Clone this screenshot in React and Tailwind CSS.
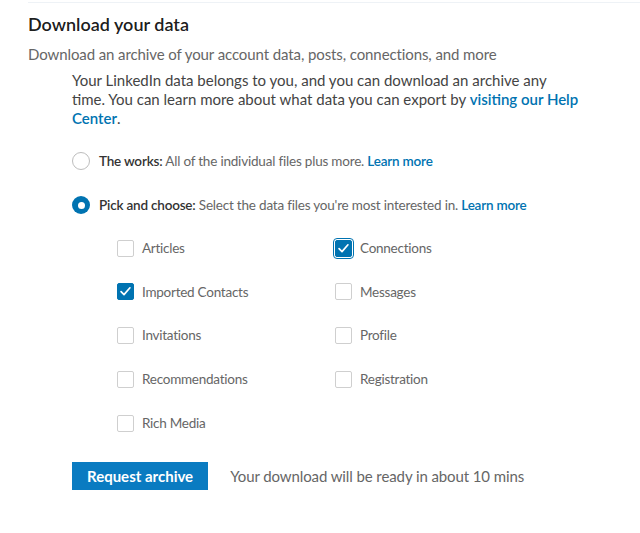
import { useState } from 'react';

const ITEMS = [
  ['Articles', false, 'Connections', true],
  ['Imported Contacts', true, 'Messages', false],
  ['Invitations', false, 'Profile', false],
  ['Recommendations', false, 'Registration', false],
  ['Rich Media', false, null, false],
];

function Check({ label, checked, focused }) {
  return (
    <label className="flex items-center gap-[8px] h-[20px]">
      <span
        className={`w-[17px] h-[17px] rounded-[2px] flex items-center justify-center ${
          checked ? 'bg-[#0073b1] border border-[#0073b1]' : 'bg-white border border-[#cfcfcf]'
        } ${focused ? 'outline outline-[1.5px] outline-offset-[1px] outline-[#0073b1]' : ''}`}
      >
        {checked && (
          <svg width="13" height="13" viewBox="0 0 14 14" aria-hidden="true">
            <path d="M2.2 7.2 5.4 10.4 11.8 3" fill="none" stroke="white" strokeWidth="1.8" strokeLinecap="round" strokeLinejoin="round" />
          </svg>
        )}
      </span>
      <span className="text-[13.5px] tracking-[-0.25px] text-[#666]">{label}</span>
    </label>
  );
}

function Radio({ selected }) {
  return selected ? (
    <span className="w-[18px] h-[18px] rounded-full bg-[#0073b1] flex items-center justify-center shrink-0">
      <span className="w-[7px] h-[7px] rounded-full bg-white" />
    </span>
  ) : (
    <span className="w-[18px] h-[18px] rounded-full border border-[#bdbdbd] bg-white shrink-0" />
  );
}

export default function App() {
  const [mode] = useState('pick');
  return (
    <div className="w-[640px] h-[533px] bg-white overflow-hidden" style={{ fontFamily: '"Lato", "Noto Sans", sans-serif' }}>
      <div className="ml-[28px] h-[3px] border-b border-[#eef2f6]" />
      <div className="pl-[28px] pt-[9px]">
        <h2 className="text-[18px] leading-[24px] font-semibold text-[#000000e6]">Download your data</h2>
        <p className="mt-[8px] text-[15px] leading-[20px] tracking-[-0.1px] text-[#666]">
          Download an archive of your account data, posts, connections, and more
        </p>
        <div className="pl-[44px] pr-[60px]">
          <p className="mt-[7px] text-[15px] leading-[19px] text-[#444]">
            Your LinkedIn data belongs to you, and you can download an archive any time. You can learn more about what data you can export by{' '}
            <a className="font-semibold leading-[19px] text-[#0073b1]">visiting our Help Center</a>.
          </p>

          <div className="mt-[22px] flex items-center gap-[9px] h-[22px]">
            <Radio selected={mode === 'works'} />
            <span className="text-[13.5px] tracking-[-0.2px] text-[#666]">
              <span className="font-semibold text-[#333]">The works:</span> All of the individual files plus more.{' '}
              <a className="font-semibold text-[#0073b1]">Learn more</a>
            </span>
          </div>
          <div className="mt-[22px] flex items-center gap-[9px] h-[22px]">
            <Radio selected={mode === 'pick'} />
            <span className="text-[13.5px] tracking-[-0.2px] text-[#666]">
              <span className="font-semibold text-[#333]">Pick and choose:</span> Select the data files you're most interested in.{' '}
              <a className="font-semibold text-[#0073b1]">Learn more</a>
            </span>
          </div>

          <div className="mt-[22px] pl-[45px] grid grid-cols-[218px_1fr] gap-y-[23.75px]">
            {ITEMS.map(([a, ac, b, bc], i) => (
              <div key={a} className="contents">
                <Check label={a} checked={ac} />
                {b ? <Check label={b} checked={bc} focused={i === 0} /> : <div />}
              </div>
            ))}
          </div>

          <div className="mt-[29px] flex items-center gap-[22px]">
            <button className="h-[28px] px-[15px] bg-[#0a7bc1] text-white text-[15px] font-bold">Request archive</button>
            <span className="text-[15px] tracking-[-0.1px] text-[#666]">Your download will be ready in about 10 mins</span>
          </div>
        </div>
      </div>
    </div>
  );
}
